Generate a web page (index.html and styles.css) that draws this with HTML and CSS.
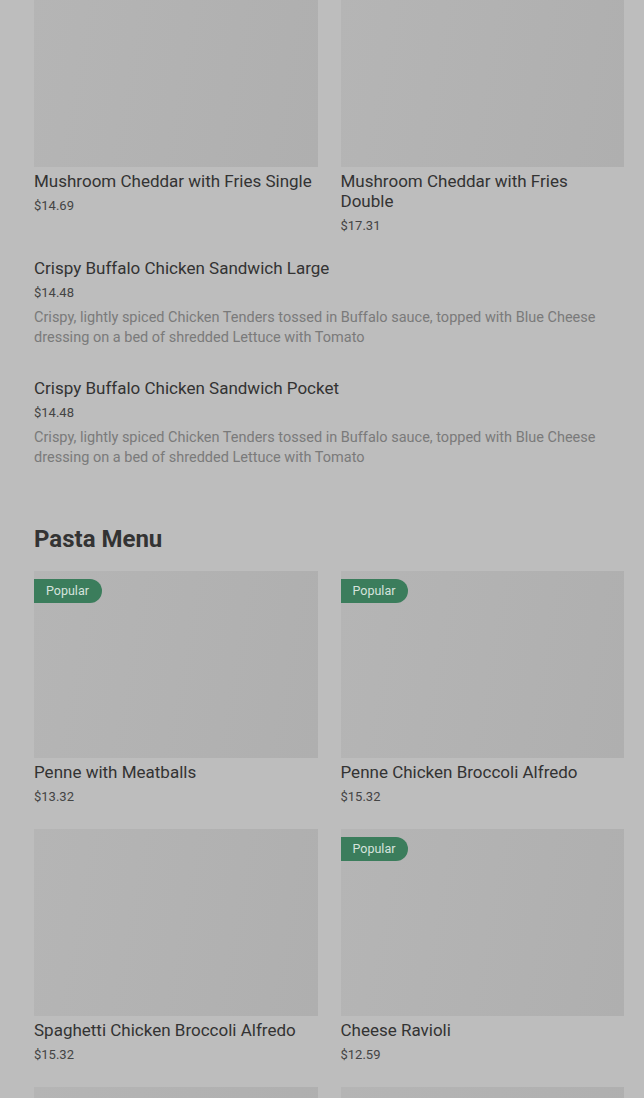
FILE: index.html
```html
<!DOCTYPE html>
<html lang="en">
<head>
  <meta charset="UTF-8" />
  <meta name="viewport" content="width=device-width, initial-scale=1.0"/>
  <title>Menu</title>
  <link rel="stylesheet" href="styles.css">
</head>
<body>

  <div class="menu">

    <div class="grade primeira">
      <div class="cartao">
        <div class="foto"></div>
        <div class="nome">Mushroom Cheddar with Fries Single</div>
        <div class="preco">$14.69</div>
      </div>
      <div class="cartao">
        <div class="foto"></div>
        <div class="nome">Mushroom Cheddar with Fries Double</div>
        <div class="preco">$17.31</div>
      </div>
    </div>

    <div class="lista">
      <div class="item">
        <div class="nome">Crispy Buffalo Chicken Sandwich Large</div>
        <div class="preco">$14.48</div>
        <div class="descricao">Crispy, lightly spiced Chicken Tenders tossed in Buffalo sauce, topped with Blue Cheese dressing on a bed of shredded Lettuce with Tomato</div>
      </div>
      <div class="item">
        <div class="nome">Crispy Buffalo Chicken Sandwich Pocket</div>
        <div class="preco">$14.48</div>
        <div class="descricao">Crispy, lightly spiced Chicken Tenders tossed in Buffalo sauce, topped with Blue Cheese dressing on a bed of shredded Lettuce with Tomato</div>
      </div>
    </div>

    <h2 class="secao">Pasta Menu</h2>

    <div class="grade">
      <div class="cartao">
        <div class="foto"><span class="selo">Popular</span></div>
        <div class="nome">Penne with Meatballs</div>
        <div class="preco">$13.32</div>
      </div>
      <div class="cartao">
        <div class="foto"><span class="selo">Popular</span></div>
        <div class="nome">Penne Chicken Broccoli Alfredo</div>
        <div class="preco">$15.32</div>
      </div>
      <div class="cartao">
        <div class="foto"></div>
        <div class="nome">Spaghetti Chicken Broccoli Alfredo</div>
        <div class="preco">$15.32</div>
      </div>
      <div class="cartao">
        <div class="foto"><span class="selo">Popular</span></div>
        <div class="nome">Cheese Ravioli</div>
        <div class="preco">$12.59</div>
      </div>
      <!-- proxima linha, fora da tela -->
      <div class="cartao">
        <div class="foto"></div>
      </div>
      <div class="cartao">
        <div class="foto"></div>
      </div>
    </div>

  </div>

</body>
</html>
```

FILE: styles.css
```css
body {
  margin: 0;
  background-color: #bdbdbd;
  font-family: Roboto, "Liberation Sans", sans-serif;
  overflow: hidden;
}

.menu {
  padding: 0 20px 0 34px;
}

.grade {
  display: grid;
  grid-template-columns: 1fr 1fr;
  column-gap: 23px;
  row-gap: 22px;
}

.primeira {
  margin-top: -20px;
}

.cartao {
  display: flex;
  flex-direction: column;
}

.foto {
  position: relative;
  height: 187px;
  background: linear-gradient(100deg, #b5b5b5, #afafaf);
  margin-bottom: 4px;
}

.selo {
  position: absolute;
  top: 8px;
  left: 0;
  height: 24px;
  line-height: 24px;
  padding: 0 13px 0 12px;
  background-color: #3b7d5c;
  color: #d6e3dc;
  font-size: 12.5px;
  border-radius: 0 12px 12px 0;
}

.nome {
  font-size: 17px;
  line-height: 20px;
  color: #333;
}

.preco {
  font-size: 13px;
  line-height: 20px;
  color: #444;
  margin-top: 5px;
}

.lista {
  display: flex;
  flex-direction: column;
  gap: 30px;
  margin-top: 22px;
}

.item .preco {
  margin-top: 5px;
}

.descricao {
  font-size: 14.5px;
  line-height: 20px;
  color: #7a7a7a;
  margin-top: 5px;
}

.secao {
  font-size: 24px;
  font-weight: 700;
  color: #333;
  margin: 55px 0 16px;
  line-height: 32px;
}
```
